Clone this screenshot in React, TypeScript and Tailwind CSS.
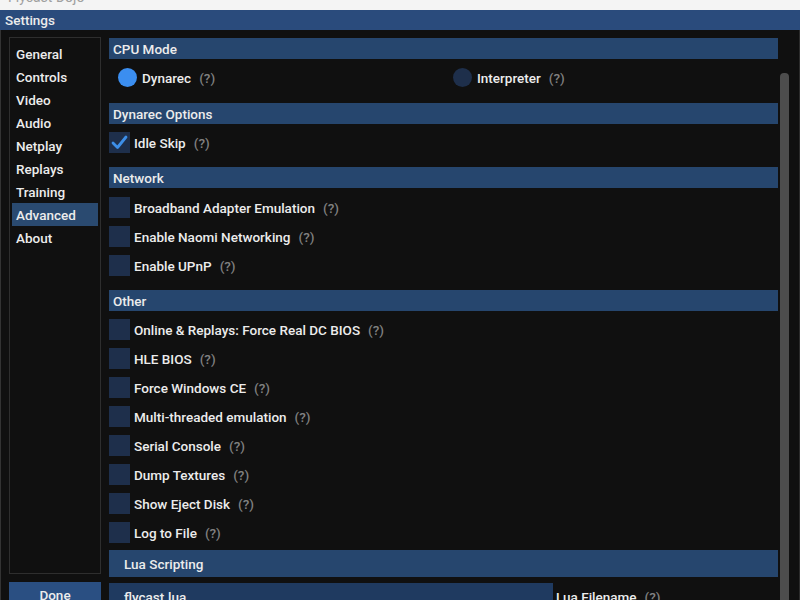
import React from "react";

const Help = () => <span className="ml-[8px] pt-[2px] text-[#808080]">(?)</span>;

function Header({ label, tall }: { label: string; tall?: boolean }) {
  return (
    <div
      className={
        tall
          ? "flex h-[27px] w-full items-center bg-[#26466e] pl-[15px] pt-[2px]"
          : "flex h-[21px] w-full items-center bg-[#26466e] pl-[4px] pt-[2px]"
      }
    >
      {label}
    </div>
  );
}

function Check({ label, checked }: { label: string; checked?: boolean }) {
  return (
    <div className="flex h-[21px] items-center">
      <div className="flex h-[21px] w-[21px] items-center justify-center bg-[#1e2f4b]">
        {checked && (
          <svg width="21" height="21" viewBox="0 0 21 21">
            <polyline
              points="4,11 8.5,15.5 17,5"
              fill="none"
              stroke="#3d8fe8"
              strokeWidth="2.8"
              strokeLinecap="round"
              strokeLinejoin="round"
            />
          </svg>
        )}
      </div>
      <span className="ml-[4px] pt-[2px]">{label}</span>
      <Help />
    </div>
  );
}

const navItems = [
  "General",
  "Controls",
  "Video",
  "Audio",
  "Netplay",
  "Replays",
  "Training",
  "Advanced",
  "About",
];

const otherItems = [
  "Online & Replays: Force Real DC BIOS",
  "HLE BIOS",
  "Force Windows CE",
  "Multi-threaded emulation",
  "Serial Console",
  "Dump Textures",
  "Show Eject Disk",
  "Log to File",
];

export default function App() {
  return (
    <div className="flex h-[600px] w-[800px] flex-col overflow-hidden bg-[#101010] font-['Roboto',sans-serif] text-[13.5px] font-medium text-[#ececec]">
      <div className="h-[10px] shrink-0 overflow-hidden bg-[#f4f4f4]">
        <div className="mt-[-12px] pl-[8px] text-[14px] font-normal leading-[18px] text-[#a0a0a0]">
          Flycast Dojo
        </div>
      </div>
      <div className="flex h-[20px] shrink-0 items-center bg-[#2a4b7c] pl-[5px] pt-[1px] text-[13.5px]">
        Settings
      </div>
      <div className="flex flex-1 border-l border-[#333]">
        <div className="flex w-[100px] shrink-0 flex-col pl-[8px] pt-[7px]">
          <div className="flex h-[537px] flex-col border border-[#2e2e2e] px-[2px] pt-[4px]">
            {navItems.map((n) => (
              <div
                key={n}
                className={
                  n === "Advanced"
                    ? "flex h-[23px] items-center bg-[#2a4a70] pl-[4px] pt-[2px]"
                    : "flex h-[23px] items-center pl-[4px] pt-[2px]"
                }
              >
                {n}
              </div>
            ))}
          </div>
          <div className="mt-[8px] flex h-[26px] items-center justify-center bg-[#2a4f82] pt-[1px]">
            Done
          </div>
        </div>
        <div className="ml-[8px] flex w-[669px] shrink-0 flex-col pt-[8px]">
          <Header label="CPU Mode" />
          <div className="mt-[8px] flex h-[21px] items-center">
            <div className="flex w-[344px] items-center pl-[9px]">
              <div className="h-[19px] w-[19px] rounded-full bg-[#3b8ef0]" />
              <span className="ml-[5px] pt-[2px]">Dynarec</span>
              <Help />
            </div>
            <div className="flex items-center">
              <div className="h-[19px] w-[19px] rounded-full bg-[#1e2f4b]" />
              <span className="ml-[5px] pt-[2px]">Interpreter</span>
              <Help />
            </div>
          </div>
          <div className="mt-[15px]">
            <Header label="Dynarec Options" />
          </div>
          <div className="mt-[8px]">
            <Check label="Idle Skip" checked />
          </div>
          <div className="mt-[14px]">
            <Header label="Network" />
          </div>
          <div className="mt-[9px] flex flex-col gap-[8px]">
            <Check label="Broadband Adapter Emulation" />
            <Check label="Enable Naomi Networking" />
            <Check label="Enable UPnP" />
          </div>
          <div className="mt-[14px]">
            <Header label="Other" />
          </div>
          <div className="mt-[8px] flex flex-col gap-[8px]">
            {otherItems.map((o) => (
              <Check key={o} label={o} />
            ))}
          </div>
          <div className="mt-[7px]">
            <Header label="Lua Scripting" tall />
          </div>
          <div className="mt-[6px] flex items-center">
            <div className="flex h-[26px] w-[444px] items-center bg-[#1f3a60] pl-[15px] pt-[2px]">
              flycast.lua
            </div>
            <span className="ml-[3px] pt-[2px]">Lua Filename</span>
            <Help />
          </div>
        </div>
        <div className="ml-[2px] w-[9px] shrink-0 pt-[43px]">
          <div className="h-[600px] rounded-[4px] bg-[#4d4d4d]" />
        </div>
        <div className="flex-1" />
        <div className="w-[1px] bg-[#2c2c2c]" />
      </div>
    </div>
  );
}
